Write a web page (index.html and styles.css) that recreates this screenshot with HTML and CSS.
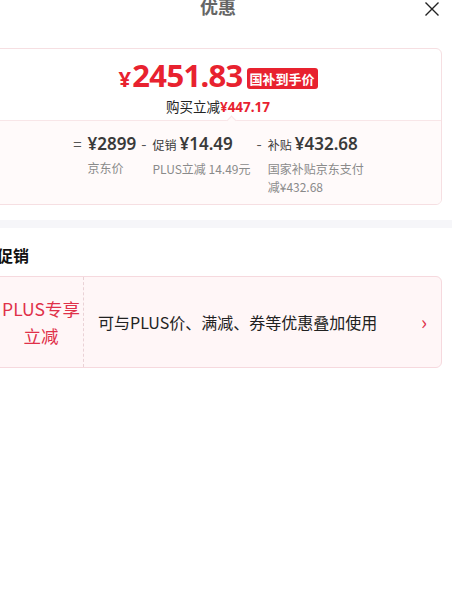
FILE: index.html
```html
<!DOCTYPE html>
<html lang="zh-CN">
<head>
  <meta charset="UTF-8">
  <meta name="viewport" content="width=device-width, initial-scale=1.0">
  <title>优惠</title>
  <link rel="stylesheet" href="styles.css">
</head>
<body>
  <div class="sheet">
    <header class="sheet-head">
      <span></span>
      <h1>优惠</h1>
      <button class="close" aria-label="关闭">
        <svg width="16" height="16" viewBox="0 0 16 16"><path d="M1.5 1.5L14.5 14.5M14.5 1.5L1.5 14.5" stroke="#222" stroke-width="1.4" fill="none"/></svg>
      </button>
    </header>

    <div class="price-card">
      <div class="price-top">
        <div class="final">
          <span class="final-num"><small>¥</small>2451.83</span>
          <span class="badge">国补到手价</span>
        </div>
        <div class="save">购买立减<b>¥447.17</b></div>
      </div>
      <div class="price-bottom">
        <div class="calc">
          <div class="calc-item">
            <span class="op">=</span>
            <div class="calc-col">
              <div class="amt">¥2899</div>
              <div class="desc">京东价</div>
            </div>
          </div>
          <div class="calc-item">
            <span class="op">-</span>
            <div class="calc-col">
              <div class="amt"><i>促销</i>¥14.49</div>
              <div class="desc nowrap">PLUS立减 14.49元</div>
            </div>
          </div>
          <div class="calc-item">
            <span class="op">-</span>
            <div class="calc-col">
              <div class="amt"><i>补贴</i>¥432.68</div>
              <div class="desc">国家补贴京东支付减¥432.68</div>
            </div>
          </div>
        </div>
      </div>
    </div>

    <div class="band"></div>

    <section class="promo">
      <h2>促销</h2>
      <div class="promo-card">
        <div class="promo-tag">PLUS专享<br>立减</div>
        <div class="promo-text">可与PLUS价、满减、券等优惠叠加使用</div>
        <span class="chev">›</span>
      </div>
    </section>
  </div>
</body>
</html>
```

FILE: styles.css
```css
html, body {
  margin: 0;
  padding: 0;
  background: #ffffff;
  overflow: hidden;
}
body {
  font-family: "Noto Sans CJK SC", "Noto Sans", sans-serif;
  color: #222;
}
.sheet {
  width: 468px;
  margin-left: -16px;
}
.sheet-head {
  display: grid;
  grid-template-columns: 1fr auto 1fr;
  align-items: center;
  height: 18px;
  margin-top: -5px;
}
.sheet-head h1 {
  margin: 0;
  font-size: 18px;
  line-height: 22px;
  font-weight: 700;
  color: #666;
}
.close {
  justify-self: end;
  margin-right: 12px;
  margin-top: 5px;
  border: none;
  background: none;
  padding: 0;
  width: 16px;
  height: 16px;
}
.price-card {
  margin: 35px 10px 0;
  border: 1px solid #f6dfe2;
  border-radius: 6px;
  overflow: hidden;
}
.price-top {
  height: 71px;
  display: flex;
  flex-direction: column;
  align-items: center;
  position: relative;
  border-bottom: 1px solid #f8e6e8;
}
.price-top::after {
  content: "";
  position: absolute;
  left: 233px;
  bottom: -4px;
  width: 6px;
  height: 6px;
  background: #fffafa;
  border-left: 1px solid #f8e6e8;
  border-top: 1px solid #f8e6e8;
  transform: rotate(45deg);
}
.final {
  display: flex;
  align-items: center;
  gap: 4px;
  margin-top: 8px;
}
.final-num {
  font-family: "Noto Sans", sans-serif;
  font-size: 31px;
  line-height: 36px;
  font-weight: 700;
  color: #e8222f;
  letter-spacing: -0.7px;
}
.final-num small {
  font-size: 22px;
  margin-right: 2px;
}
.badge {
  background: #e8222f;
  color: #fff;
  font-size: 13px;
  font-weight: 700;
  line-height: 21px;
  padding: 0 3px;
  border-radius: 3px;
  margin-top: 3px;
}
.save {
  font-size: 13.5px;
  line-height: 18px;
  margin-top: 1px;
  color: #222;
}
.save b {
  color: #e8222f;
  font-family: "Noto Sans", sans-serif;
  font-weight: 700;
}
.price-bottom {
  background: #fffafa;
  height: 83px;
}
.calc {
  display: flex;
  justify-content: center;
  padding-top: 10px;
  margin-left: 8px;
}
.calc-item {
  display: flex;
  align-items: flex-start;
}
.op {
  font-size: 15px;
  line-height: 26px;
  color: #555;
  margin-right: 6px;
}
.calc-col {
  max-width: 98px;
  margin-right: 5px;
}
.calc-item:nth-child(2) .calc-col {
  max-width: none;
  margin-right: 6px;
}
.amt {
  font-family: "Noto Sans", sans-serif;
  font-size: 17px;
  line-height: 26px;
  font-weight: 600;
  color: #3a3a3a;
  white-space: nowrap;
}
.amt i {
  font-style: normal;
  font-family: "Noto Sans CJK SC", sans-serif;
  font-size: 12px;
  font-weight: 400;
  margin-right: 3px;
}
.desc {
  font-size: 12px;
  line-height: 18px;
  color: #8a8a8a;
  margin-top: 2px;
}
.nowrap {
  white-space: nowrap;
}
.band {
  height: 8px;
  background: #f6f6f9;
  margin-top: 15px;
}
.promo {
  padding: 0 10px;
}
.promo h2 {
  margin: 0;
  padding: 16px 0 0 3px;
  font-size: 16px;
  line-height: 22px;
  font-weight: 700;
  color: #111;
}
.promo-card {
  margin-top: 10px;
  height: 90px;
  display: flex;
  align-items: center;
  background: #fff6f7;
  border: 1px solid #f6d9de;
  border-radius: 6px;
}
.promo-tag {
  width: 89px;
  height: 100%;
  display: flex;
  align-items: center;
  justify-content: center;
  text-align: center;
  font-size: 17.5px;
  line-height: 27px;
  color: #e03049;
  border-right: 1px dashed #ead2d6;
  box-sizing: border-box;
  padding-left: 4px;
}
.promo-text {
  flex: 1;
  padding-left: 14px;
  font-size: 16px;
  color: #222;
}
.chev {
  color: #e03049;
  font-size: 20px;
  margin-right: 14px;
  line-height: 1;
}
```
